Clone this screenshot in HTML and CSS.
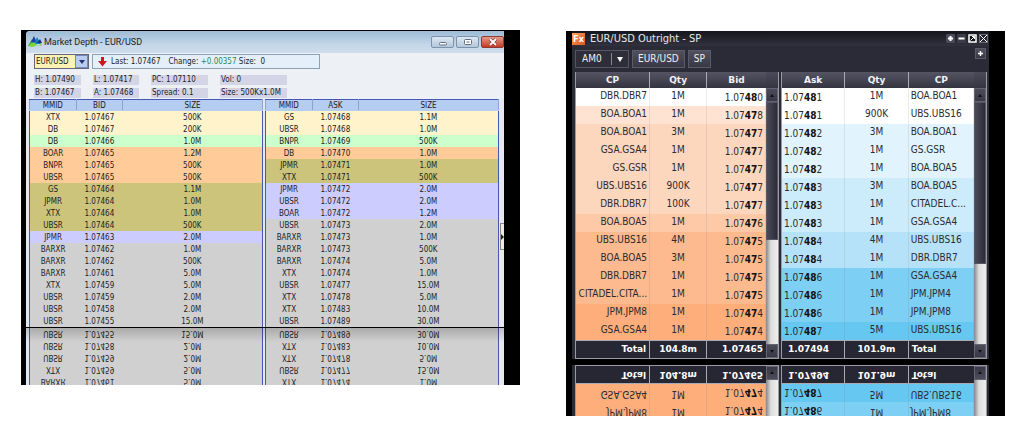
FILE: index.html
```html
<!DOCTYPE html>
<html lang="en">
<head>
<meta charset="utf-8">
<title>Market Depth</title>
<link rel="stylesheet" href="styles.css">
</head>
<body>
<main class="stage">
<section class="depth-frame" aria-label="Market Depth">
  <div class="depth">
    <header class="depth-title">
      <svg class="depth-logo" width="14" height="12" viewBox="0 0 14 12" aria-hidden="true"><path d="M0 10L4 3l3 7z" fill="#35a83c"/><path d="M3 6L6 0l3 7z" fill="#1b3fa8"/><path d="M6 8l3-7 4 7z" fill="#1680b8"/><path d="M1 9q4-4 7-1t5-1l1 3q-4-2-7 0t-6 0z" fill="#7bd43a"/><path d="M9 7l3-4 2 4z" fill="#16308c"/></svg>
      <h1>Market Depth - EUR/USD</h1>
      <div class="win-buttons">
        <button aria-label="Minimize"><svg width="10" height="8" viewBox="0 0 10 8"><rect x="1.5" y="4.500" width="7" height="2.500" rx="1" fill="#fff" stroke="#626f80"/></svg></button>
        <button aria-label="Maximize"><svg width="10" height="8" viewBox="0 0 10 8"><rect x="1.500" y="1.500" width="7" height="5" rx="1" fill="#fff" stroke="#626f80"/><path d="M3.500 4h3" stroke="#626f80"/></svg></button>
        <button class="close" aria-label="Close"><svg width="10" height="8" viewBox="0 0 10 8"><path d="M2 1l6 6M8 1L2 7" stroke="#633" stroke-width="3"/><path d="M2 1l6 6M8 1L2 7" stroke="#fff" stroke-width="1.800"/></svg></button>
      </div>
    </header>
    <div class="depth-tools">
      <label class="pair"><select aria-label="Currency pair"><option>EUR/USD</option></select><span class="pair-arrow"><svg width="6" height="4" viewBox="0 0 6 4"><path d="M0 0h6L3 4z" fill="#23336f"/></svg></span></label>
      <div class="last">
        <svg width="9" height="10" viewBox="0 0 9 10" aria-hidden="true"><path d="M3 0h3v4h3L4.500 9.500 0 4h3z" fill="#d2141c"/></svg>
        <span>Last: 1.07467</span><span class="change">Change: <em>+0.00357</em> Size:&nbsp; 0</span>
      </div>
    </div>
    <div class="stats">
      <span>H: 1.07490</span><span>L: 1.07417</span><span>PC: 1.07110</span><span>Vol: 0</span>
      <span>B: 1.07467</span><span>A: 1.07468</span><span>Spread: 0.1</span><span>Size: 500Kx1.0M</span>
    </div>
    <div class="sheets">
      <table class="sheet">
        <colgroup><col class="c-mm"><col class="c-price"><col></colgroup>
        <thead><tr><th>MMID</th><th>BID</th><th>SIZE</th></tr></thead>
        <tbody>
        <tr class="yellow"><td>XTX</td><td>1.07467</td><td>500K</td></tr>
        <tr class="yellow"><td>DB</td><td>1.07467</td><td>200K</td></tr>
        <tr class="green"><td>DB</td><td>1.07466</td><td>1.0M</td></tr>
        <tr class="orange"><td>BOAR</td><td>1.07465</td><td>1.2M</td></tr>
        <tr class="orange"><td>BNPR</td><td>1.07465</td><td>500K</td></tr>
        <tr class="orange"><td>UBSR</td><td>1.07465</td><td>500K</td></tr>
        <tr class="olive"><td>GS</td><td>1.07464</td><td>1.1M</td></tr>
        <tr class="olive"><td>JPMR</td><td>1.07464</td><td>1.0M</td></tr>
        <tr class="olive"><td>XTX</td><td>1.07464</td><td>1.0M</td></tr>
        <tr class="olive"><td>UBSR</td><td>1.07464</td><td>500K</td></tr>
        <tr class="lilac"><td>JPMR</td><td>1.07463</td><td>2.0M</td></tr>
        <tr><td>BARXR</td><td>1.07462</td><td>1.0M</td></tr>
        <tr><td>BARXR</td><td>1.07462</td><td>500K</td></tr>
        <tr><td>BARXR</td><td>1.07461</td><td>5.0M</td></tr>
        <tr><td>XTX</td><td>1.07459</td><td>5.0M</td></tr>
        <tr><td>UBSR</td><td>1.07459</td><td>2.0M</td></tr>
        <tr><td>UBSR</td><td>1.07458</td><td>2.0M</td></tr>
        <tr><td>UBSR</td><td>1.07455</td><td>15.0M</td></tr>
        </tbody>
      </table>
      <table class="sheet">
        <colgroup><col class="c-mm"><col class="c-price"><col></colgroup>
        <thead><tr><th>MMID</th><th>ASK</th><th>SIZE</th></tr></thead>
        <tbody>
        <tr class="yellow"><td>GS</td><td>1.07468</td><td>1.1M</td></tr>
        <tr class="yellow"><td>UBSR</td><td>1.07468</td><td>1.0M</td></tr>
        <tr class="green"><td>BNPR</td><td>1.07469</td><td>500K</td></tr>
        <tr class="orange"><td>DB</td><td>1.07470</td><td>1.0M</td></tr>
        <tr class="olive"><td>JPMR</td><td>1.07471</td><td>1.0M</td></tr>
        <tr class="olive"><td>XTX</td><td>1.07471</td><td>500K</td></tr>
        <tr class="lilac"><td>JPMR</td><td>1.07472</td><td>2.0M</td></tr>
        <tr class="lilac"><td>UBSR</td><td>1.07472</td><td>2.0M</td></tr>
        <tr class="lilac"><td>BOAR</td><td>1.07472</td><td>1.2M</td></tr>
        <tr><td>UBSR</td><td>1.07473</td><td>2.0M</td></tr>
        <tr><td>BARXR</td><td>1.07473</td><td>1.0M</td></tr>
        <tr><td>BARXR</td><td>1.07473</td><td>500K</td></tr>
        <tr><td>BARXR</td><td>1.07474</td><td>5.0M</td></tr>
        <tr><td>XTX</td><td>1.07474</td><td>1.0M</td></tr>
        <tr><td>UBSR</td><td>1.07477</td><td>15.0M</td></tr>
        <tr><td>XTX</td><td>1.07478</td><td>5.0M</td></tr>
        <tr><td>XTX</td><td>1.07483</td><td>10.0M</td></tr>
        <tr><td>UBSR</td><td>1.07489</td><td>30.0M</td></tr>
        </tbody>
      </table>
    </div>
    <button class="drawer" aria-label="Expand panel"><svg width="3" height="6" viewBox="0 0 3 6"><path d="M0 0l3 3-3 3z" fill="#222"/></svg></button>
  </div>
  <div class="depth-mirror" aria-hidden="true">
    <div class="sheets flipped">
      <table class="sheet">
        <colgroup><col class="c-mm"><col class="c-price"><col></colgroup>
        <tbody>
        <tr><td>BARXR</td><td>1.07461</td><td>5.0M</td></tr>
        <tr><td>XTX</td><td>1.07459</td><td>5.0M</td></tr>
        <tr><td>UBSR</td><td>1.07459</td><td>2.0M</td></tr>
        <tr><td>UBSR</td><td>1.07458</td><td>2.0M</td></tr>
        <tr><td>UBSR</td><td>1.07455</td><td>15.0M</td></tr>
        </tbody>
      </table>
      <table class="sheet">
        <colgroup><col class="c-mm"><col class="c-price"><col></colgroup>
        <tbody>
        <tr><td>XTX</td><td>1.07474</td><td>1.0M</td></tr>
        <tr><td>UBSR</td><td>1.07477</td><td>15.0M</td></tr>
        <tr><td>XTX</td><td>1.07478</td><td>5.0M</td></tr>
        <tr><td>XTX</td><td>1.07483</td><td>10.0M</td></tr>
        <tr><td>UBSR</td><td>1.07489</td><td>30.0M</td></tr>
        </tbody>
      </table>
    </div>
  </div>
</section>

<section class="fx-frame" aria-label="EUR/USD Outright">
  <div class="fx">
    <header class="fx-title">
      <span class="fx-logo">Fx</span>
      <h2>EUR/USD Outright - SP</h2>
      <div class="fx-buttons">
        <button aria-label="Add"><svg width="9" height="9" viewBox="0 0 9 9"><rect width="9" height="9" rx="1" fill="#4a4a58"/><path d="M4.500 2v5M2 4.500h5" stroke="#fff" stroke-width="2"/></svg></button>
        <button aria-label="Minimize"><svg width="9" height="9" viewBox="0 0 9 9"><rect width="9" height="9" rx="1" fill="#3a3a48"/><path d="M1.500 4.500h6" stroke="#fff" stroke-width="2"/></svg></button>
        <button aria-label="Restore"><svg width="9" height="9" viewBox="0 0 9 9"><rect x="1" y="1" width="7" height="7" fill="#14141c" stroke="#fff" stroke-width="1.500"/><path d="M2.500 6.500l4-4M4 2.500h2.500V5" stroke="#fff" fill="none"/></svg></button>
        <button aria-label="Close"><svg width="9" height="9" viewBox="0 0 9 9"><rect x=".5" y=".5" width="8" height="8" fill="none" stroke="#6c6c78"/><path d="M1 1l7 7M8 1L1 8" stroke="#fff"/></svg></button>
      </div>
    </header>
    <div class="fx-tools">
      <label class="amo"><select aria-label="Account"><option>AM0</option></select><span class="amo-arrow"><svg width="6" height="5" viewBox="0 0 6 5"><path d="M0 0h6L3 5z" fill="#fff"/></svg></span></label>
      <button>EUR/USD</button><button>SP</button>
      <button class="add" aria-label="Add row"><svg width="7" height="7" viewBox="0 0 7 7"><path d="M3.500 1v5M1 3.500h5" stroke="#fff" stroke-width="1.500"/></svg></button>
    </div>
    <div class="books">
      <div class="book">
        <table class="quotes bid">
          <colgroup><col class="q-cp"><col class="q-qty"><col></colgroup>
          <thead><tr><th>CP</th><th>Qty</th><th>Bid</th></tr></thead>
          <tbody>
          <tr class="b0"><td>DBR.DBR7</td><td>1M</td><td>1.07<b>48</b>0</td></tr>
          <tr class="b1"><td>BOA.BOA1</td><td>1M</td><td>1.07<b>47</b>8</td></tr>
          <tr class="b2"><td>BOA.BOA1</td><td>3M</td><td>1.07<b>47</b>7</td></tr>
          <tr class="b2"><td>GSA.GSA4</td><td>1M</td><td>1.07<b>47</b>7</td></tr>
          <tr class="b2"><td>GS.GSR</td><td>1M</td><td>1.07<b>47</b>7</td></tr>
          <tr class="b2"><td>UBS.UBS16</td><td>900K</td><td>1.07<b>47</b>7</td></tr>
          <tr class="b2"><td>DBR.DBR7</td><td>100K</td><td>1.07<b>47</b>7</td></tr>
          <tr class="b3"><td>BOA.BOA5</td><td>1M</td><td>1.07<b>47</b>6</td></tr>
          <tr class="b4"><td>UBS.UBS16</td><td>4M</td><td>1.07<b>47</b>5</td></tr>
          <tr class="b4"><td>BOA.BOA5</td><td>3M</td><td>1.07<b>47</b>5</td></tr>
          <tr class="b4"><td>DBR.DBR7</td><td>1M</td><td>1.07<b>47</b>5</td></tr>
          <tr class="b4"><td>CITADEL.CITA...</td><td>1M</td><td>1.07<b>47</b>5</td></tr>
          <tr class="b5"><td>JPM.JPM8</td><td>1M</td><td>1.07<b>47</b>4</td></tr>
          <tr class="b5"><td>GSA.GSA4</td><td>1M</td><td>1.07<b>47</b>4</td></tr>
          </tbody>
          <tfoot><tr><td>Total</td><td>104.8m</td><td>1.07465</td></tr></tfoot>
        </table>
        <div class="scroll"><i class="up"></i><i class="thumb thumb-bid"></i><i class="down"></i></div>
      </div>
      <div class="book">
        <table class="quotes ask">
          <colgroup><col class="q-ask"><col class="q-askqty"><col></colgroup>
          <thead><tr><th>Ask</th><th>Qty</th><th>CP</th></tr></thead>
          <tbody>
          <tr class="a0"><td>1.07<b>48</b>1</td><td>1M</td><td>BOA.BOA1</td></tr>
          <tr class="a0"><td>1.07<b>48</b>1</td><td>900K</td><td>UBS.UBS16</td></tr>
          <tr class="a1"><td>1.07<b>48</b>2</td><td>3M</td><td>BOA.BOA1</td></tr>
          <tr class="a1"><td>1.07<b>48</b>2</td><td>1M</td><td>GS.GSR</td></tr>
          <tr class="a1"><td>1.07<b>48</b>2</td><td>1M</td><td>BOA.BOA5</td></tr>
          <tr class="a2"><td>1.07<b>48</b>3</td><td>3M</td><td>BOA.BOA5</td></tr>
          <tr class="a2"><td>1.07<b>48</b>3</td><td>1M</td><td>CITADEL.C...</td></tr>
          <tr class="a2"><td>1.07<b>48</b>3</td><td>1M</td><td>GSA.GSA4</td></tr>
          <tr class="a3"><td>1.07<b>48</b>4</td><td>4M</td><td>UBS.UBS16</td></tr>
          <tr class="a3"><td>1.07<b>48</b>4</td><td>1M</td><td>DBR.DBR7</td></tr>
          <tr class="a4"><td>1.07<b>48</b>6</td><td>1M</td><td>GSA.GSA4</td></tr>
          <tr class="a4"><td>1.07<b>48</b>6</td><td>1M</td><td>JPM.JPM4</td></tr>
          <tr class="a4"><td>1.07<b>48</b>6</td><td>1M</td><td>JPM.JPM8</td></tr>
          <tr class="a5"><td>1.07<b>48</b>7</td><td>5M</td><td>UBS.UBS16</td></tr>
          </tbody>
          <tfoot><tr><td>1.07494</td><td>101.9m</td><td>Total</td></tr></tfoot>
        </table>
        <div class="scroll"><i class="up"></i><i class="thumb thumb-ask"></i><i class="down"></i></div>
      </div>
    </div>
  </div>
  <div class="fx-mirror" aria-hidden="true">
    <div class="books flipped">
      <div class="book">
        <table class="quotes bid">
          <colgroup><col class="q-cp"><col class="q-qty"><col></colgroup>
          <tbody>
          <tr class="b5"><td>JPM.JPM8</td><td>1M</td><td>1.07<b>47</b>4</td></tr>
          <tr class="b5"><td>GSA.GSA4</td><td>1M</td><td>1.07<b>47</b>4</td></tr>
          </tbody>
          <tfoot><tr><td>Total</td><td>104.8m</td><td>1.07465</td></tr></tfoot>
        </table>
        <div class="scroll"><i class="down"></i></div>
      </div>
      <div class="book">
        <table class="quotes ask">
          <colgroup><col class="q-ask"><col class="q-askqty"><col></colgroup>
          <tbody>
          <tr class="a4"><td>1.07<b>48</b>6</td><td>1M</td><td>JPM.JPM8</td></tr>
          <tr class="a5"><td>1.07<b>48</b>7</td><td>5M</td><td>UBS.UBS16</td></tr>
          </tbody>
          <tfoot><tr><td>1.07494</td><td>101.9m</td><td>Total</td></tr></tfoot>
        </table>
        <div class="scroll"><i class="down"></i></div>
      </div>
    </div>
  </div>
</section>
</main>
</body>
</html>
```
FILE: styles.css
```css
* { box-sizing: border-box; }
body { margin: 0; background: #fff; font-family: "DejaVu Sans Condensed", "DejaVu Sans", sans-serif; }
button, select { font: inherit; color: inherit; margin: 0; padding: 0; border: 0; background: none; }
svg { display: block; }
h1, h2 { margin: 0; font-weight: normal; }
table { border-collapse: collapse; table-layout: fixed; }
th, td { padding: 0; overflow: hidden; white-space: nowrap; }

.stage { display: grid; grid-template-columns: 499fr 439fr; gap: 46px; padding: 30px 19px 24px 21px; align-items: start; }
.flipped { transform: scaleY(-1); }

/* Market depth window */
.depth-frame { background: #000; padding: 1px 16px 0 5px; font-size: 8px; line-height: 10px; color: #222; }
.depth { position: relative; background: #edf0f5; border-radius: 4px 0 0 0; overflow: hidden; }
.depth-title { display: flex; align-items: center; gap: 2px; height: 22px; padding-left: 2px; background: linear-gradient(#9dbbd6, #c3d6e8 60%, #cfddec); }
.depth-title h1 { font: 9px/12px Roboto, sans-serif; }
.win-buttons { display: flex; gap: 2px; margin-left: auto; }
.win-buttons button { display: flex; align-items: center; justify-content: center; width: 23px; height: 12px; border: 1px solid #7e93ab; border-radius: 2px; background: linear-gradient(#dce7f2, #b3c7dc); }
.win-buttons .close { border-color: #8e3a36; background: linear-gradient(#e69a88, #c83a25); }
.depth-tools { display: flex; gap: 3px; padding: 1px 8px 0; }
.pair { display: flex; width: 55px; height: 15px; border: 1px solid #667; background: #fbf3b4; }
.pair select { flex: 1; min-width: 0; appearance: none; padding-left: 1px; font-size: 8px; }
.pair-arrow { display: flex; align-items: center; justify-content: center; width: 13px; background: #b9cdf2; border: 1px solid #7289bd; }
.last { display: flex; align-items: center; gap: 4px; width: 228px; height: 15px; padding-left: 5px; border: 1px solid #8ba3b5; background: #e4effa; }
.change { margin-left: 4px; }
.last em { font-style: normal; color: #2c8a55; }
.stats { display: grid; grid-template-columns: 47px 46px 57px 67px; column-gap: 12px; row-gap: 3px; padding: 6px 8px 1px; }
.stats span { height: 10px; padding-left: 1px; background: #d4d4e7; white-space: nowrap; }
.sheets { display: grid; grid-template-columns: 1fr 1fr; gap: 2px; padding: 0 5px 0 3px; background: #e5e7f1; }
.sheet { width: 100%; border: 1px solid #4657b4; border-width: 0 1px; background: #d0d0d0; text-align: center; }
.sheet th { height: 11px; background: #b5cdf0; border: 1px solid #4657b4; border-left-color: #8ba3d0; border-right-color: #8ba3d0; border-bottom-color: #b5cdf0; font-weight: normal; line-height: 9px; }
.sheet td { height: 12px; padding-top: 1px; line-height: 11px; }
.c-mm, .c-price { width: 20%; }
.yellow { background: #fff3cc; }
.green { background: #ccffcc; }
.orange { background: #ffcc99; }
.olive { background: #ccc47a; }
.lilac { background: #ccccff; }
.drawer { position: absolute; right: 0; bottom: 77px; display: flex; align-items: center; justify-content: center; width: 4px; height: 27px; background: #e8eaf2; border: 1px solid #888; border-right: 0; }
.depth-mirror { position: relative; margin-top: 1px; height: 57px; overflow: hidden; }
.depth-mirror::after { content: ""; position: absolute; inset: 0 0 auto; height: 14px; background: linear-gradient(rgba(0, 0, 0, .18), rgba(0, 0, 0, 0)); }

/* FX outright window */
.fx-frame { margin-top: 1px; padding: 0 16px 0 6px; background: #000; font-size: 10px; line-height: 12px; color: #2b2b30; }
.fx { background: #2b2b38; }
.fx-title { display: flex; align-items: center; gap: 5px; height: 15px; padding-right: 1px; background: linear-gradient(#15151d, #32323f); color: #e6e6ea; }
.fx-title h2 { font-size: 11px; }
.fx-logo { width: 13px; height: 12px; background: linear-gradient(135deg, #f7a361, #d9581d); color: #fff; font-size: 9px; font-weight: bold; line-height: 12px; text-align: center; }
.fx-buttons { display: flex; gap: 2px; margin-left: auto; }
.fx-tools { display: flex; align-items: center; gap: 3px; height: 26px; padding: 0 3px; color: #eee; }
.fx-tools button { height: 18px; padding: 0 5px; background: linear-gradient(#50505e, #383845); border: 1px solid #5b5b68; }
.amo { display: flex; width: 54px; height: 18px; border: 1px solid #555563; background: #2e2e3b; }
.amo select { flex: 1; min-width: 0; appearance: none; padding-left: 6px; }
.amo-arrow { display: flex; align-items: center; justify-content: center; width: 17px; margin: 2px 0; border-left: 1px solid #888; }
.fx-tools .add { align-self: flex-start; display: flex; align-items: center; justify-content: center; width: 11px; height: 11px; margin-top: 2px; margin-left: auto; padding: 0; }
.books { display: grid; grid-template-columns: 204fr 206fr; gap: 2px; padding: 0 2px 0 3px; background: #2b2b38; }
.book { display: flex; border: 1px solid #9a9aa4; border-top-width: 0; background: linear-gradient(#4b4b59, #353542 16px); }
.quotes { flex: 1; width: 0; border-collapse: separate; border-spacing: 0; }
.quotes th { height: 16px; border-right: 1px solid #aaaab3; color: #f2f2f4; background: linear-gradient(#545463, #343441); font: bold 9px/14px "DejaVu Sans", sans-serif; text-align: center; }
.quotes th:last-child, .quotes tfoot td:last-child { border-right: 0; }
.quotes tbody td { height: 18px; padding: 0 2px 2px; border-right: 1px solid rgba(120, 120, 120, .15); line-height: 16px; }
.quotes td:nth-child(2) { text-align: center; }
.bid td:first-child, .bid td:last-child { text-align: right; }
.quotes.bid tbody td:last-child, .quotes.ask tbody td:first-child { padding-top: 2px; padding-bottom: 0; }
.quotes b { color: #111; }
.quotes tfoot td { height: 18px; padding: 0 3px 2px; background: #272733; border-top: 1px solid #aaaab3; border-right: 1px solid #aaaab3; color: #fff; font: bold 9px/14px "DejaVu Sans", sans-serif; }
.quotes.ask tfoot td:first-child { padding-left: 6px; }
.q-cp { width: 39%; }
.q-qty { width: 30%; }
.q-ask, .q-askqty { width: 33%; }
.b0, .a0 { background: #fff; }
.b1 { background: #fee2d2; }
.b2 { background: #fdd6be; }
.b3 { background: #fdc9a7; }
.b4 { background: #fdba8e; }
.b5 { background: #fdae7a; }
.a1 { background: #e1f4fd; }
.a2 { background: #ccebfb; }
.a3 { background: #b5e2f9; }
.a4 { background: #7dcff3; }
.a5 { background: #66c7f1; }
.scroll { display: flex; flex-direction: column; width: 12px; margin-top: 16px; background: linear-gradient(90deg, #85858c, #dcdcdc 40%, #eee); }
.up, .down { display: flex; align-items: center; justify-content: center; height: 14px; background: linear-gradient(#4b4b5a, #383846); border: 1px solid #646472; }
.up::after, .down::after { content: ""; border: 2px solid transparent; }
.up::after { border-bottom: 3px solid #111; border-top: 0; }
.down::after { border-top: 3px solid #111; border-bottom: 0; }
.down { margin-top: auto; }
.thumb { border: 1px solid #565664; background: linear-gradient(90deg, #4a4a59, #2c2c39); }
.thumb-bid { flex: 0 0 51%; }
.thumb-ask { flex: 0 0 60%; }
.fx-mirror { height: 51px; margin-top: 6px; overflow: hidden; }
.fx-mirror .scroll { margin-top: 0; }
```
